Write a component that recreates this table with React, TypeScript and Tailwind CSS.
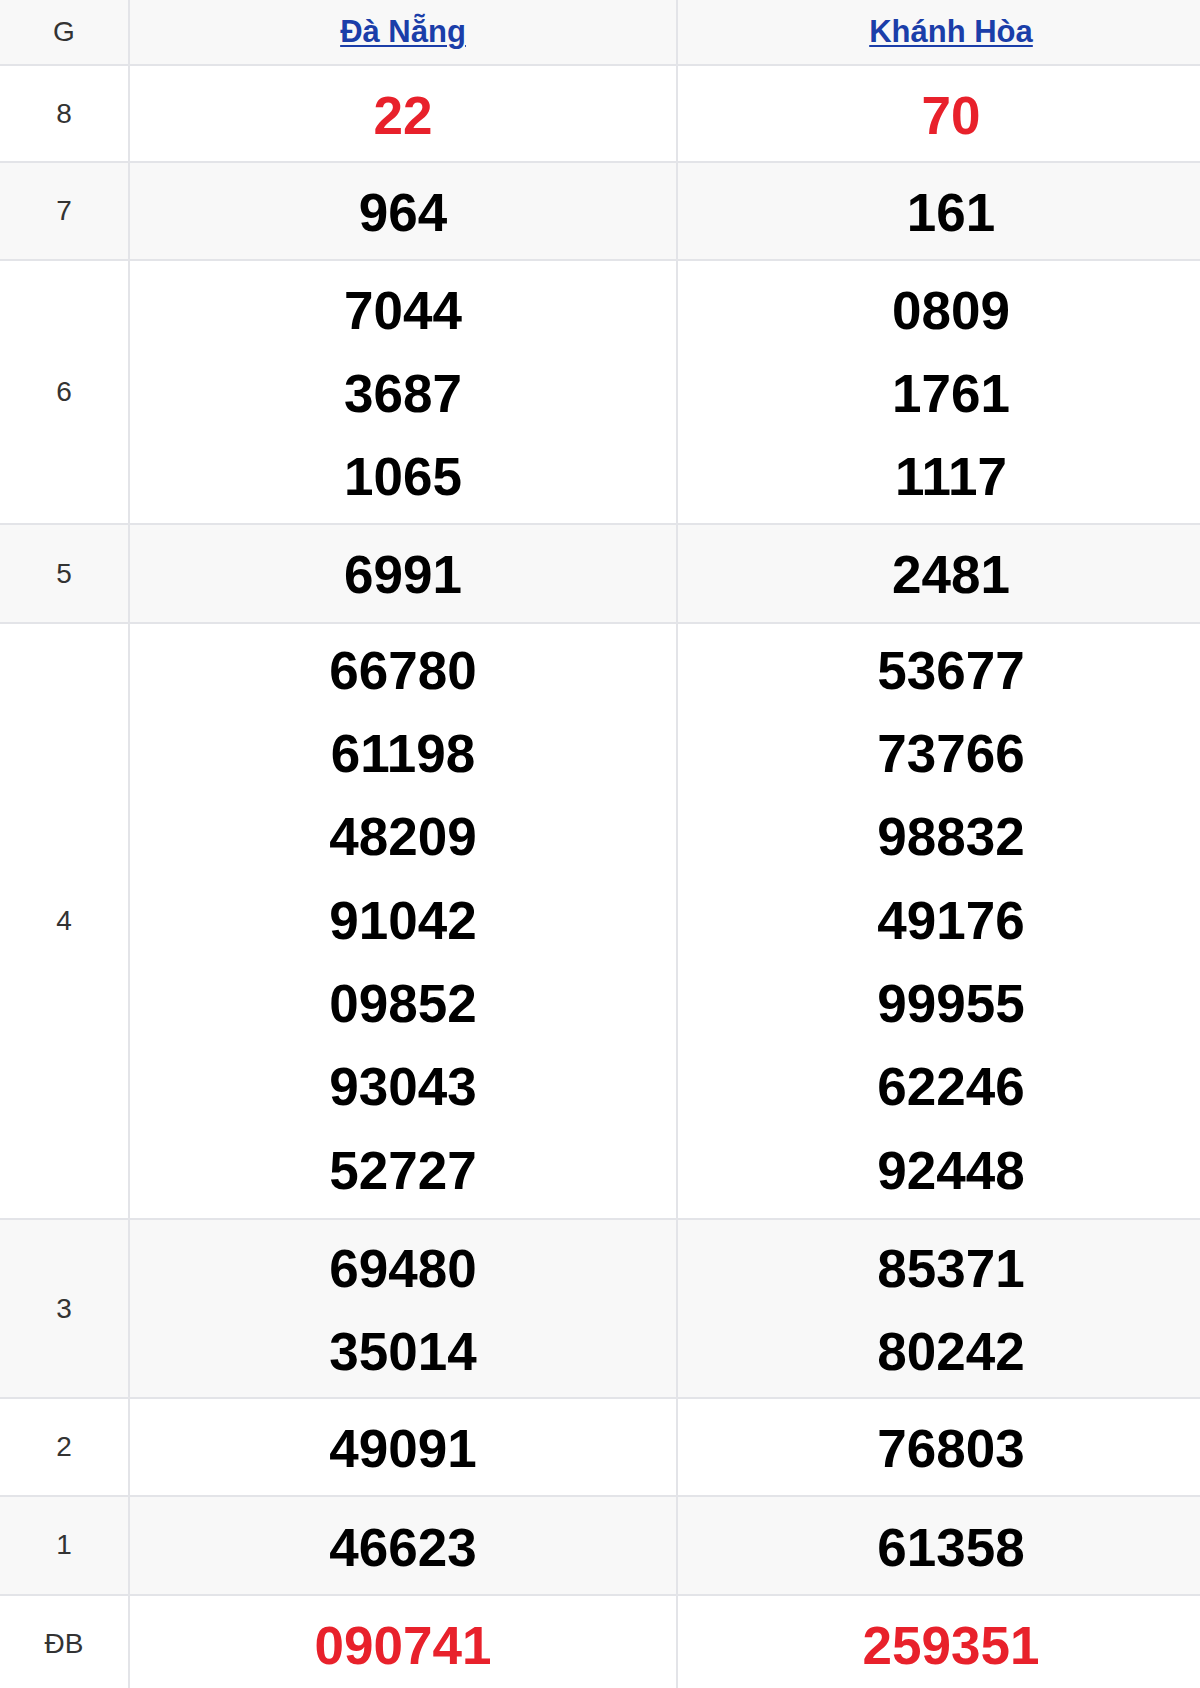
const PROVINCES = ['Đà Nẵng', 'Khánh Hòa'];

type Prize = { label: string; red?: boolean; pad: string; values: [string[], string[]] };

const PRIZES: Prize[] = [
  { label: '8', red: true, pad: 'pt-[8px] pb-[4px]', values: [['22'], ['70']] },
  { label: '7', pad: 'pt-[8px] pb-[4px]', values: [['964'], ['161']] },
  { label: '6', pad: 'pt-[8px] pb-[5px]', values: [['7044', '3687', '1065'], ['0809', '1761', '1117']] },
  { label: '5', pad: 'pt-[8px] pb-[5px]', values: [['6991'], ['2481']] },
  {
    label: '4',
    pad: 'pt-[5px] pb-[6px]',
    values: [
      ['66780', '61198', '48209', '91042', '09852', '93043', '52727'],
      ['53677', '73766', '98832', '49176', '99955', '62246', '92448'],
    ],
  },
  { label: '3', pad: 'pt-[7px] pb-[4px]', values: [['69480', '35014'], ['85371', '80242']] },
  { label: '2', pad: 'pt-[8px] pb-[4px]', values: [['49091'], ['76803']] },
  { label: '1', pad: 'pt-[9px] pb-[5px]', values: [['46623'], ['61358']] },
  { label: 'ĐB', red: true, pad: 'pt-[8px] pb-[4px]', values: [['090741'], ['259351']] },
];

function NumberCell({ values, red, pad }: { values: string[]; red?: boolean; pad: string }) {
  return (
    <div className={`w-[548px] shrink-0 border-r-2 border-[#e3e4e8] flex flex-col items-center ${pad}`}>
      {values.map((v, i) => (
        <div
          key={i}
          className={`h-[83.3px] leading-[83.3px] text-[53px] font-bold ${red ? 'text-[#e8212b]' : 'text-black'}`}
        >
          {v}
        </div>
      ))}
    </div>
  );
}

export default function App() {
  return (
    <div className="w-[1200px] overflow-hidden bg-white" style={{ fontFamily: '"Liberation Sans", Arial, sans-serif' }}>
      <div className="w-[1226px]">
        {/* header */}
        <div className="flex h-[66px] bg-[#f8f8f8] border-b-2 border-[#e3e4e8]">
          <div className="w-[130px] shrink-0 border-r-2 border-[#e3e4e8] flex items-center justify-center text-[28px] text-[#333]">
            G
          </div>
          {PROVINCES.map((p) => (
            <div
              key={p}
              className="w-[548px] shrink-0 border-r-2 border-[#e3e4e8] flex items-center justify-center"
            >
              <a href="#" className="text-[31px] font-bold text-[#1b3ea9] underline underline-offset-[3px] decoration-2">
                {p}
              </a>
            </div>
          ))}
        </div>

        {PRIZES.map((prize, idx) => (
          <div
            key={prize.label}
            className={`flex border-b-2 border-[#e3e4e8] ${idx % 2 === 1 ? 'bg-[#f8f8f8]' : 'bg-white'}`}
          >
            <div className="w-[130px] shrink-0 border-r-2 border-[#e3e4e8] flex items-center justify-center text-[28px] text-[#333]">
              {prize.label}
            </div>
            <NumberCell values={prize.values[0]} red={prize.red} pad={prize.pad} />
            <NumberCell values={prize.values[1]} red={prize.red} pad={prize.pad} />
          </div>
        ))}
      </div>
    </div>
  );
}
